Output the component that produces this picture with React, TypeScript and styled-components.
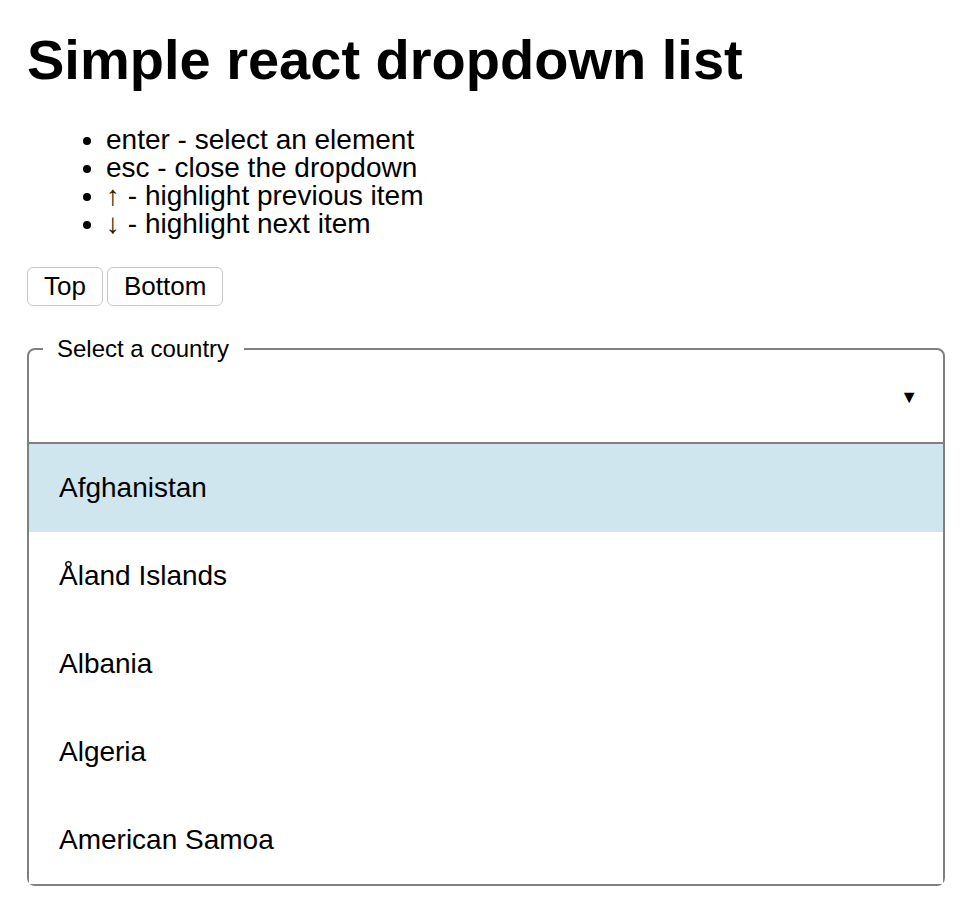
import React, { useState } from "react";
import styled, { createGlobalStyle } from "styled-components";

const GlobalStyle = createGlobalStyle`
  body {
    margin: 0;
    background: #fff;
    color: #000;
    font-family: "Liberation Sans", Arial, Helvetica, sans-serif;
  }
`;

const Page = styled.div`
  padding: 28px 21px 0 27px;
`;

const Title = styled.h1`
  margin: 0;
  font-size: 56px;
  line-height: 64px;
  font-weight: bold;
`;

const KeyList = styled.ul`
  margin: 34px 0 0;
  padding-left: 79px;
  font-size: 28px;
  line-height: 28px;
`;

const Key = styled.span`
  color: #2a1a00;
`;

const ButtonRow = styled.div`
  display: flex;
  gap: 4px;
  margin-top: 29px;
`;

const Button = styled.button`
  height: 39px;
  padding: 0 16px;
  font-family: inherit;
  font-size: 26px;
  color: #000;
  background: #fff;
  border: 1px solid #c8c8c8;
  border-radius: 6px;
  cursor: pointer;
`;

const Fieldset = styled.fieldset`
  margin: 30px 0 0;
  padding: 0;
  border: 2px solid #808080;
  border-radius: 8px;
  min-width: 0;
`;

const Legend = styled.legend`
  margin-left: 14px;
  padding: 0 15px 0 14px;
  font-size: 24px;
  line-height: 26px;
`;

const Header = styled.div`
  height: 82px;
  padding: 0 25px 10px 0;
  box-sizing: border-box;
  display: flex;
  align-items: center;
  justify-content: flex-end;
  border-bottom: 2px solid #808080;
`;

const Caret = styled.span`
  font-size: 18px;
  line-height: 1;
`;

const Option = styled.div<{ $active: boolean }>`
  height: 88px;
  padding-left: 30px;
  display: flex;
  align-items: center;
  font-size: 28px;
  background: ${(p) => (p.$active ? "#cfe6ee" : "#fff")};
  cursor: pointer;
`;

const countries = [
  "Afghanistan",
  "Åland Islands",
  "Albania",
  "Algeria",
  "American Samoa",
];

export default function App() {
  const [active, setActive] = useState(0);

  return (
    <Page>
      <GlobalStyle />
      <Title>Simple react dropdown list</Title>
      <KeyList>
        <li>enter - select an element</li>
        <li>esc - close the dropdown</li>
        <li>
          <Key>↑</Key> - highlight previous item
        </li>
        <li>
          <Key>↓</Key> - highlight next item
        </li>
      </KeyList>
      <ButtonRow>
        <Button>Top</Button>
        <Button>Bottom</Button>
      </ButtonRow>
      <Fieldset>
        <Legend>Select a country</Legend>
        <Header>
          <Caret>▼</Caret>
        </Header>
        {countries.map((c, i) => (
          <Option key={c} $active={i === active} onMouseEnter={() => setActive(i)}>
            {c}
          </Option>
        ))}
      </Fieldset>
    </Page>
  );
}
